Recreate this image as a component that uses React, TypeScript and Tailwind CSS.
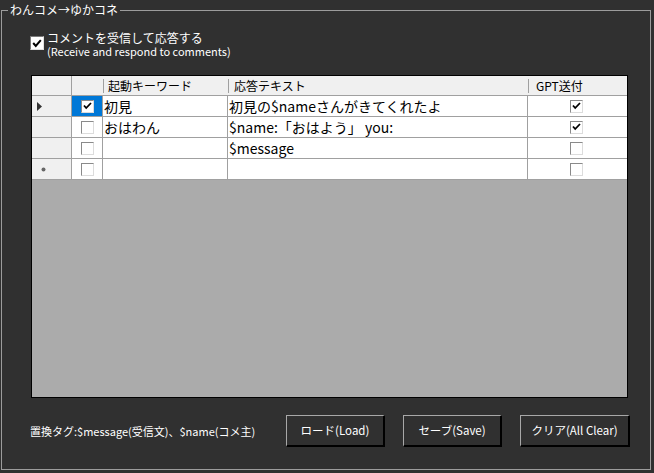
import React from "react";

const jp = { fontFamily: '"Noto Sans CJK JP", "Noto Sans", sans-serif' };

type Row = {
    marker: "arrow" | "star" | "";
    enabled: boolean;
    keyword: string;
    text: string;
    gpt: boolean;
    selected?: boolean;
};

const rows: Row[] = [
    { marker: "arrow", enabled: true, keyword: "初見", text: "初見の$nameさんがきてくれたよ", gpt: true, selected: true },
    { marker: "", enabled: false, keyword: "おはわん", text: "$name:「おはよう」 you:", gpt: true },
    { marker: "", enabled: false, keyword: "", text: "$message", gpt: false },
    { marker: "star", enabled: false, keyword: "", text: "", gpt: false },
];

function CellCheck({ checked }: { checked: boolean }) {
    return (
        <span className="flex h-[13px] w-[13px] items-center justify-center border border-t-[#8a8a8a] border-l-[#8a8a8a] border-b-[#dcdcdc] border-r-[#dcdcdc] bg-white">
            {checked && (
                <svg width="9" height="8" viewBox="0 0 9 8">
                    <path d="M1 3.5 L3.2 6 L8 1" stroke="#000" strokeWidth="1.8" fill="none" />
                </svg>
            )}
        </span>
    );
}

function Button({ label }: { label: string }) {
    return (
        <button className="flex h-[32px] w-full items-center justify-center border border-t-[#a8a8a8] border-l-[#a8a8a8] border-b-2 border-r-2 border-b-black border-r-black bg-[#303030] text-[11.5px] text-white">
            {label}
        </button>
    );
}

export default function App() {
    return (
        <div className="h-[473px] w-[654px] overflow-hidden bg-[#303030] px-[1px] pt-[3px]" style={jp}>
            <fieldset className="h-[467px] w-[650px] border border-[#9c9c9c]">
                <legend className="ml-[6px] px-[2px] text-[12px] leading-[14px] text-white">わんコメ→ゆかコネ</legend>

                {/* Receive comments checkbox */}
                <div className="mt-[14px] flex items-start gap-[3px] pl-[28px]">
                    <span className="mt-[5px] flex h-[14px] w-[14px] shrink-0 items-center justify-center border border-t-[#7a7a7a] border-l-[#7a7a7a] border-b-[#e0e0e0] border-r-[#e0e0e0] bg-white">
                        <svg width="10" height="9" viewBox="0 0 10 9">
                            <path d="M1.2 4 L3.8 7 L8.8 1.2" stroke="#000" strokeWidth="2" fill="none" />
                        </svg>
                    </span>
                    <div className="flex flex-col text-white">
                        <span className="text-[12px] leading-[14px]">コメントを受信して応答する</span>
                        <span className="text-[11px] leading-[13px]">(Receive and respond to comments)</span>
                    </div>
                </div>

                {/* Grid */}
                <div className="ml-[29px] mt-[17px] flex h-[323px] w-[597px] flex-col border border-black bg-[#ababab]">
                    <div className="flex h-[20px] border-b border-[#a0a0a0] bg-[#f0f0f0] text-[12px] leading-[19px] text-black">
                        <div className="w-[40px] border-r border-[#a0a0a0]" />
                        <div className="w-[31px]" />
                        <div className="flex w-[125px] items-center">
                            <span className="h-[14px] w-px bg-[#a0a0a0]" />
                            <span className="pl-[4px]">起動キーワード</span>
                        </div>
                        <div className="flex w-[300px] items-center">
                            <span className="h-[14px] w-px bg-[#a0a0a0]" />
                            <span className="pl-[5px]">応答テキスト</span>
                        </div>
                        <div className="flex flex-1 items-center">
                            <span className="h-[14px] w-px bg-[#a0a0a0]" />
                            <span className="pl-[7px]">GPT送付</span>
                        </div>
                    </div>

                    {rows.map((r, i) => (
                        <div key={i} className="flex h-[21px] border-b border-[#a0a0a0] bg-white text-[14px] leading-[20px] text-black">
                            <div className="flex w-[40px] items-center border-r border-[#a0a0a0] bg-[#f0f0f0] pl-[5px]">
                                {r.marker === "arrow" && (
                                    <svg width="5" height="9" viewBox="0 0 5 9">
                                        <polygon points="0,0 5,4.5 0,9" fill="#333" />
                                    </svg>
                                )}
                                {r.marker === "star" && (
                                    <svg className="ml-[4px]" width="5" height="5" viewBox="0 0 5 5">
                                        <circle cx="2.5" cy="2.5" r="2" fill="#666" />
                                    </svg>
                                )}
                            </div>
                            <div className={`flex w-[31px] items-center justify-center border-r border-[#a0a0a0] ${r.selected ? "bg-[#0078d7]" : ""}`}>
                                <CellCheck checked={r.enabled} />
                            </div>
                            <div className="w-[125px] border-r border-[#a0a0a0] pl-[1px]">{r.keyword}</div>
                            <div className="w-[300px] border-r border-[#a0a0a0] pl-[1px]">{r.text}</div>
                            <div className="flex flex-1 items-center justify-center pr-[3px]">
                                <CellCheck checked={r.gpt} />
                            </div>
                        </div>
                    ))}
                </div>

                {/* Footer */}
                <div className="ml-[28px] mt-[17px] flex items-center">
                    <span className="w-[256px] text-[11px] text-white">置換タグ:$message(受信文)、$name(コメ主)</span>
                    <div className="flex gap-[18px]">
                        <div className="w-[99px]"><Button label="ロード(Load)" /></div>
                        <div className="w-[99px]"><Button label="セーブ(Save)" /></div>
                        <div className="w-[110px]"><Button label="クリア(All Clear)" /></div>
                    </div>
                </div>
            </fieldset>
        </div>
    );
}
